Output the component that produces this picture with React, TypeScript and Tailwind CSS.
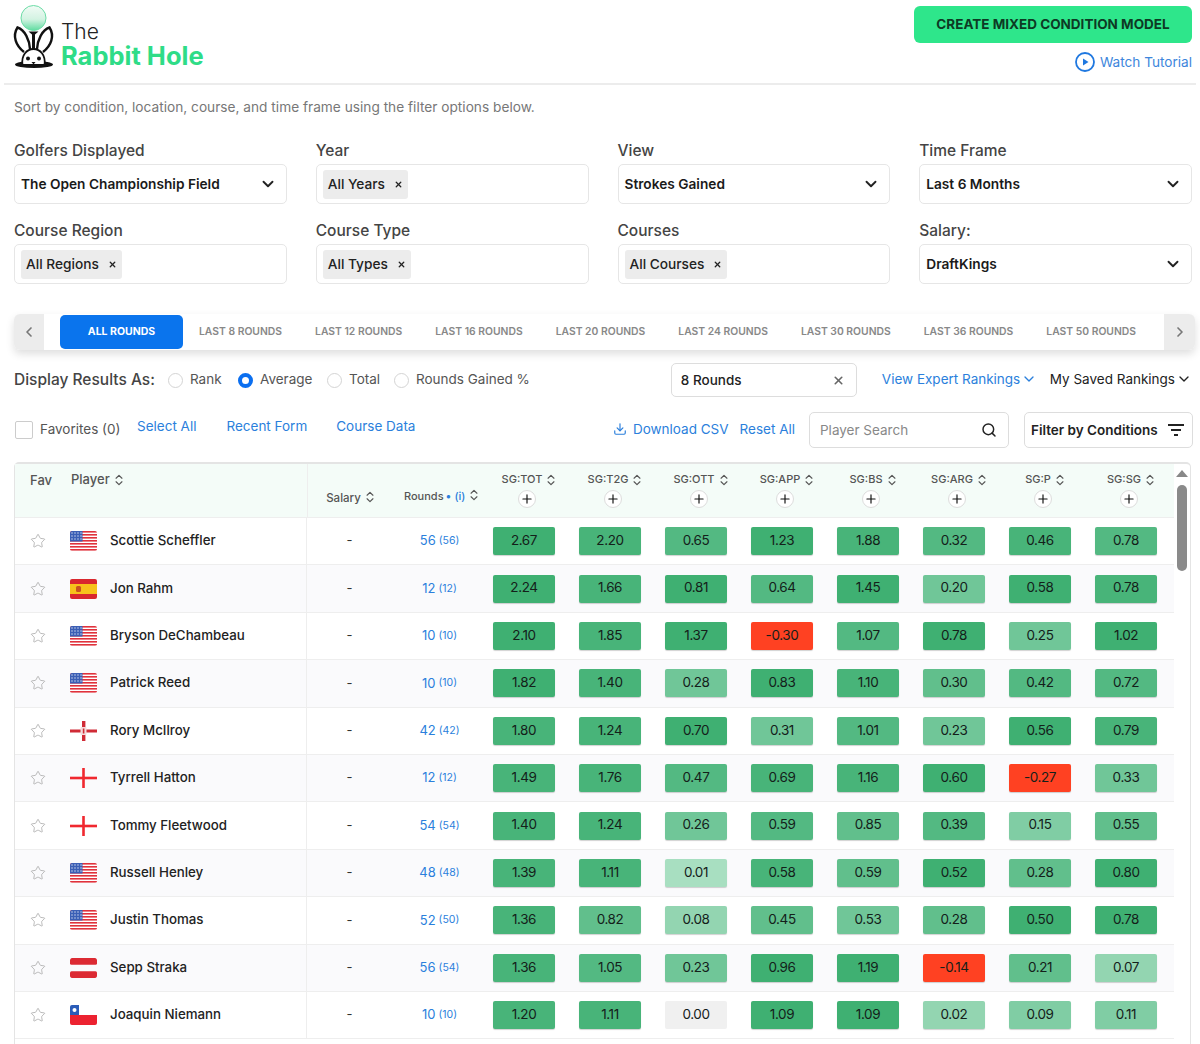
import { ChevronDown, ChevronLeft, ChevronRight, ChevronsUpDown, Download, Plus, Search, Star, X } from "lucide-react";

const shades: Record<string, string> = {
  a: "bg-[#3fb072]",
  b: "bg-[#48b479]",
  c: "bg-[#53b982]",
  d: "bg-[#61bf8c]",
  e: "bg-[#70c698]",
  f: "bg-[#80cda4]",
  g: "bg-[#93d5b1]",
  h: "bg-[#a8dfc1]",
  z: "bg-[#f0f0f0] !shadow-none",
  r: "bg-[#ff4122]",
};

const players = [
  { name: "Scottie Scheffler", flag: "us", rounds: "56", sub: "(56)", cells: "2.67:a 2.20:b 0.65:c 1.23:a 1.88:b 0.32:c 0.46:b 0.78:c" },
  { name: "Jon Rahm", flag: "es", rounds: "12", sub: "(12)", cells: "2.24:a 1.66:b 0.81:a 0.64:c 1.45:a 0.20:e 0.58:a 0.78:b" },
  { name: "Bryson DeChambeau", flag: "us", rounds: "10", sub: "(10)", cells: "2.10:a 1.85:b 1.37:a -0.30:r 1.07:c 0.78:a 0.25:e 1.02:a" },
  { name: "Patrick Reed", flag: "us", rounds: "10", sub: "(10)", cells: "1.82:a 1.40:b 0.28:e 0.83:a 1.10:b 0.30:d 0.42:c 0.72:c" },
  { name: "Rory McIlroy", flag: "nir", rounds: "42", sub: "(42)", cells: "1.80:b 1.24:b 0.70:a 0.31:e 1.01:c 0.23:e 0.56:a 0.79:b" },
  { name: "Tyrrell Hatton", flag: "en", rounds: "12", sub: "(12)", cells: "1.49:b 1.76:b 0.47:c 0.69:b 1.16:b 0.60:a -0.27:r 0.33:e" },
  { name: "Tommy Fleetwood", flag: "en", rounds: "54", sub: "(54)", cells: "1.40:b 1.24:b 0.26:e 0.59:c 0.85:d 0.39:c 0.15:f 0.55:d" },
  { name: "Russell Henley", flag: "us", rounds: "48", sub: "(48)", cells: "1.39:b 1.11:b 0.01:h 0.58:b 0.59:d 0.52:a 0.28:d 0.80:a" },
  { name: "Justin Thomas", flag: "us", rounds: "52", sub: "(50)", cells: "1.36:b 0.82:d 0.08:g 0.45:d 0.53:e 0.28:d 0.50:a 0.78:a" },
  { name: "Sepp Straka", flag: "at", rounds: "56", sub: "(54)", cells: "1.36:b 1.05:c 0.23:e 0.96:a 1.19:a -0.14:r 0.21:d 0.07:g" },
  { name: "Joaquin Niemann", flag: "cl", rounds: "10", sub: "(10)", cells: "1.20:b 1.11:b 0.00:z 1.09:a 1.09:a 0.02:g 0.09:f 0.11:f" },
];

const columns = ["SG:TOT", "SG:T2G", "SG:OTT", "SG:APP", "SG:BS", "SG:ARG", "SG:P", "SG:SG"];
const tabs = ["LAST 8 ROUNDS", "LAST 12 ROUNDS", "LAST 16 ROUNDS", "LAST 20 ROUNDS", "LAST 24 ROUNDS", "LAST 30 ROUNDS", "LAST 36 ROUNDS", "LAST 50 ROUNDS"];

function Logo() {
  return (
    <svg width="50" height="70" viewBox="0 0 50 70" className="shrink-0">
      <defs>
        <linearGradient id="ball" x1="0" y1="0" x2="0" y2="1">
          <stop offset="0" stopColor="#f2fbf6" />
          <stop offset="0.55" stopColor="#d3f3e2" />
          <stop offset="1" stopColor="#5fdca0" />
        </linearGradient>
      </defs>
      <circle cx="23.5" cy="18" r="12.5" fill="url(#ball)" stroke="#6bdca6" strokeWidth="1" />
      <path d="M14 52C6 46 2 36 7.500 27.500 15 30 19.500 40 20 49" fill="#fff" stroke="#111" strokeWidth="2.400" />
      <path d="M33 52c8-6 12-16 6.500-24.500C32 30 27.500 40 27 49" fill="#fff" stroke="#111" strokeWidth="2.400" />
      <path d="M18.500 31.500h10l-3.500 3v14.500h-3V34.500z" fill="#111" />
      <ellipse cx="24" cy="64.500" rx="19" ry="3.600" fill="#111" />
      <path d="M12.500 65C11 55 17 49 23.500 49S36 55 34.500 65z" fill="#fff" stroke="#111" strokeWidth="1.800" />
      <circle cx="18" cy="58.500" r="2" fill="#111" />
      <circle cx="29" cy="58.500" r="2" fill="#111" />
      <path d="M21.500 62h4l-2 2.400z" fill="#111" />
    </svg>
  );
}

function Flag({ code }: { code: string }) {
  if (code === "us") {
    return (
      <svg width="27" height="20" viewBox="0 0 27 20" className="shrink-0 rounded-[2px]">
        <rect width="27" height="20" fill="#fff" />
        {[0, 3, 6, 9, 12, 15, 18].map((y) => (
          <rect key={y} y={y} width="27" height="1.600" fill="#e0323c" />
        ))}
        <rect width="12.500" height="10.500" fill="#3b5fb5" />
        {[2, 5, 8].map((y) =>
          [2, 5, 8, 11].map((x) => <circle key={x + "-" + y} cx={x} cy={y} r="0.700" fill="#dfe6f7" />)
        )}
      </svg>
    );
  }
  if (code === "es") {
    return (
      <svg width="27" height="20" viewBox="0 0 27 20" className="shrink-0 rounded-[2px]">
        <rect width="27" height="20" fill="#d9272e" />
        <rect y="5" width="27" height="10" fill="#f7c21b" />
        <rect x="6" y="7" width="5" height="6" rx="1.500" fill="#c9531f" />
      </svg>
    );
  }
  if (code === "nir") {
    return (
      <svg width="27" height="20" viewBox="0 0 27 20" className="shrink-0">
        <rect y="8.500" width="27" height="3" fill="#d02b36" />
        <rect x="12" width="3.400" height="20" fill="#d02b36" />
        <rect x="10.500" y="6" width="6" height="8" rx="1" fill="#f3dcdc" />
        <rect x="12.800" y="7.500" width="1.600" height="5" fill="#d02b36" />
      </svg>
    );
  }
  if (code === "en") {
    return (
      <svg width="27" height="20" viewBox="0 0 27 20" className="shrink-0">
        <rect y="8.700" width="27" height="2.600" fill="#f0282f" />
        <rect x="12.200" width="2.600" height="20" fill="#f0282f" />
      </svg>
    );
  }
  if (code === "at") {
    return (
      <svg width="27" height="20" viewBox="0 0 27 20" className="shrink-0 rounded-[2px]">
        <rect width="27" height="6.700" rx="1.500" fill="#dc2a33" />
        <rect y="13.300" width="27" height="6.700" rx="1.500" fill="#dc2a33" />
      </svg>
    );
  }
  return (
    <svg width="27" height="20" viewBox="0 0 27 20" className="shrink-0 rounded-[2px]">
      <rect y="10" width="27" height="10" fill="#ec2230" />
      <rect width="9" height="10" fill="#2a5cb8" />
      <circle cx="4.500" cy="5" r="2" fill="#fff" />
    </svg>
  );
}

function Sort() {
  return <ChevronsUpDown size={14} strokeWidth={2} className="shrink-0 text-[#555]" />;
}

function SelectBox({ label, value }: { label: string; value: string }) {
  return (
    <div>
      <div className="h-[24px] text-[15.500px] leading-[24px] font-medium text-[#444]">{label}</div>
      <div className="mt-[1px] flex h-[40px] items-center justify-between rounded-[5px] border border-[#e6e6e6] pr-[9px] pl-[6px] text-[13.700px] font-semibold text-[#1a1a1a]">
        <span>{value}</span>
        <ChevronDown size={18} strokeWidth={2.500} className="text-[#222]" />
      </div>
    </div>
  );
}

function TagBox({ label, value }: { label: string; value: string }) {
  return (
    <div>
      <div className="h-[24px] text-[15.500px] leading-[24px] font-medium text-[#444]">{label}</div>
      <div className="mt-[1px] flex h-[40px] items-center rounded-[5px] border border-[#e6e6e6] pl-[6px]">
        <div className="flex h-[29px] items-center gap-[9px] rounded-[3px] bg-[#ececec] px-[5px] text-[13.700px] font-medium text-[#222]">
          <span>{value}</span>
          <X size={9} strokeWidth={3.500} className="text-[#222]" />
        </div>
      </div>
    </div>
  );
}

function Radio({ label, on, className }: { label: string; on?: boolean; className?: string }) {
  return (
    <div className={"flex items-center gap-[7px] " + (className || "")}>
      {on ? (
        <span className="h-[15px] w-[15px] rounded-full border-[4px] border-[#0b6ff0] bg-white" />
      ) : (
        <span className="h-[15px] w-[15px] rounded-full border border-[#d4d4d4] bg-white" />
      )}
      <span className="-translate-y-[1px] text-[13.500px] text-[#555]">{label}</span>
    </div>
  );
}

function PlayerRow({ p, i }: { p: (typeof players)[number]; i: number }) {
  return (
    <div className={"flex h-[47.400px] border-b border-[#eeeeee] " + (i % 2 ? "bg-[#fafafc]" : "bg-white")}>
      <div className="flex w-[45px] items-center justify-center pl-[1px]">
        <Star size={16} strokeWidth={1.200} className="text-[#aaaaaa]" />
      </div>
      <div className="flex w-[247px] items-center gap-[13px] border-r border-[#eeeeee] pl-[10px] text-[13.300px] font-medium text-[#222]">
        <Flag code={p.flag} />
        <span>{p.name}</span>
      </div>
      <div className="flex w-[85px] items-center justify-center text-[13px] text-[#333]">-</div>
      <div className="flex w-[89px] items-center justify-center gap-[3px] pl-[6px] text-[#2b7fdc]">
        <span className="text-[13px]">{p.rounds}</span>
        <span className="text-[10.500px]">{p.sub}</span>
      </div>
      {p.cells.split(" ").map((c, k) => {
        const [v, s] = c.split(":");
        return (
          <div key={k} className="flex w-[86px] items-center justify-center">
            <div className={"flex h-[28px] w-[62px] items-center justify-center rounded-[2px] pb-[2px] text-[13.500px] tracking-[-0.4px] text-[#14201a] shadow-[0_1px_1px_rgba(0,0,0,0.18)] " + shades[s]}>
              {v}
            </div>
          </div>
        );
      })}
    </div>
  );
}

export default function App() {
  return (
    <div className="h-screen w-[1200px] overflow-hidden bg-white [font-family:Inter,sans-serif]">
      <header className="mx-[4px] flex h-[85px] justify-between border-b-2 border-[#ececec] pr-[4px] pl-[6px]">
        <div className="flex items-start gap-[1px]">
          <Logo />
          <div className="pt-[20px]">
            <div className="text-[21px] leading-[23px] font-light text-[#222]">The</div>
            <div className="text-[25.500px] leading-[25px] font-bold text-[#2fdc87]">Rabbit Hole</div>
          </div>
        </div>
        <div className="flex flex-col items-end pt-[6px]">
          <div className="flex h-[37px] w-[278px] items-center justify-center rounded-[6px] bg-[#2ee68b] text-[13.500px] font-bold text-[#0d3a24]">
            CREATE MIXED CONDITION MODEL
          </div>
          <div className="mt-[9px] flex items-center gap-[5px] text-[13.600px] text-[#3d86dc]">
            <svg width="20" height="20" viewBox="0 0 20 20">
              <circle cx="10" cy="10" r="9" fill="none" stroke="#1f78e0" strokeWidth="1.800" />
              <path d="M8 6.500l5.500 3.500L8 13.500z" fill="#1f78e0" />
            </svg>
            Watch Tutorial
          </div>
        </div>
      </header>

      <div className="mt-[13px] px-[14px] text-[13.700px] leading-[18px] text-[#777]">
        Sort by condition, location, course, and time frame using the filter options below.
      </div>

      <div className="mt-[23px] grid w-[1192px] grid-cols-4 gap-x-[29px] gap-y-[15px] pl-[14px]">
        <SelectBox label="Golfers Displayed" value="The Open Championship Field" />
        <TagBox label="Year" value="All Years" />
        <SelectBox label="View" value="Strokes Gained" />
        <SelectBox label="Time Frame" value="Last 6 Months" />
        <TagBox label="Course Region" value="All Regions" />
        <TagBox label="Course Type" value="All Types" />
        <TagBox label="Courses" value="All Courses" />
        <SelectBox label="Salary:" value="DraftKings" />
      </div>

      <div className="mt-[30px] ml-[14px] flex h-[36px] w-[1181px] items-center rounded-[6px] bg-white shadow-[0_4px_8px_rgba(0,0,0,0.13)]">
        <div className="flex h-[36px] w-[30px] items-center justify-center rounded-l-[6px] bg-[#ececec]">
          <ChevronLeft size={16} strokeWidth={2.500} className="text-[#777]" />
        </div>
        <div className="ml-[16px] flex h-[34px] w-[123px] items-center justify-center rounded-[5px] bg-[#0a74ed] text-[10.500px] font-bold text-white">
          ALL ROUNDS
        </div>
        <div className="ml-[16px] flex flex-1 gap-[33px] text-[10.350px] font-semibold whitespace-nowrap text-[#888]">
          {tabs.map((t) => (
            <span key={t}>{t}</span>
          ))}
        </div>
        <div className="flex h-[36px] w-[31px] items-center justify-center rounded-r-[6px] bg-[#ececec]">
          <ChevronRight size={16} strokeWidth={2.500} className="text-[#777]" />
        </div>
      </div>

      <div className="mt-[13px] flex h-[34px] items-center pr-[8px] pl-[14px]">
        <span className="w-[154px] text-[15.500px] font-medium text-[#444]">Display Results As:</span>
        <Radio label="Rank" className="w-[70px]" />
        <Radio label="Average" on className="w-[89px]" />
        <Radio label="Total" className="w-[67px]" />
        <Radio label="Rounds Gained %" />
        <div className="ml-[141px] flex h-[34px] w-[186px] items-center justify-between rounded-[5px] border border-[#dddddd] pr-[11px] pl-[9px] text-[13.500px] font-medium text-[#222]">
          8 Rounds
          <X size={13} strokeWidth={3} className="text-[#666]" />
        </div>
        <div className="ml-[25px] flex -translate-y-[1px] items-center gap-[1px] text-[13.500px] text-[#2b7fdc]">
          View Expert Rankings
          <ChevronDown size={16} strokeWidth={2} />
        </div>
        <div className="ml-auto flex -translate-y-[1px] items-center gap-[1px] text-[13.500px] text-[#222]">
          My Saved Rankings
          <ChevronDown size={16} strokeWidth={2} />
        </div>
      </div>

      <div className="mt-[15px] flex h-[36px] items-center pr-[7px] pl-[15px]">
        <span className="h-[18px] w-[18px] rounded-[2px] border border-[#cccccc]" />
        <span className="ml-[7px] w-[97px] -translate-y-[1px] text-[13.500px] text-[#555]">Favorites (0)</span>
        <span className="-translate-y-[4px] text-[13.500px] text-[#2b7fdc]">Select All</span>
        <span className="ml-[30px] -translate-y-[4px] text-[13.500px] text-[#2b7fdc]">Recent Form</span>
        <span className="ml-[29px] -translate-y-[4px] text-[13.500px] text-[#2b7fdc]">Course Data</span>
        <div className="ml-auto flex -translate-y-[1px] items-center gap-[6px] text-[13.500px] text-[#2b7fdc]">
          <Download size={14} strokeWidth={2} />
          Download CSV
        </div>
        <span className="ml-[11px] -translate-y-[1px] text-[13.500px] text-[#2b7fdc]">Reset All</span>
        <div className="ml-[14px] flex h-[36px] w-[200px] items-center justify-between rounded-[5px] border border-[#dddddd] pr-[11px] pl-[10px] text-[13.500px] text-[#888]">
          Player Search
          <Search size={16} strokeWidth={2.200} className="text-[#222]" />
        </div>
        <div className="ml-[15px] flex h-[36px] w-[169px] items-center justify-between rounded-[5px] border border-[#dddddd] pr-[8px] pl-[6px] text-[13.500px] font-semibold text-[#222]">
          Filter by Conditions
          <svg width="16" height="12" viewBox="0 0 16 12">
            <path d="M0 1h16M3 6h10M6 11h4" stroke="#222" strokeWidth="1.800" fill="none" />
          </svg>
        </div>
      </div>

      <div className="mt-[14px] ml-[14px] flex w-[1177px] rounded-t-[5px] border-t-2 border-r border-l border-[#e4e4e4]">
        <div className="w-[1159px]">
          <div className="flex h-[54px] border-b border-[#eeeeee] bg-[#f4fcf8] text-[#555]">
            <div className="w-[45px] pt-[7px] pl-[15px] text-[13px] font-medium">Fav</div>
            <div className="flex h-[32px] w-[247px] items-center gap-[2px] pl-[11px] text-[13px] font-medium">
              Player
              <Sort />
            </div>
            <div className="flex w-[85px] items-start justify-center gap-[2px] border-l border-[#eeeeee] pt-[26px] pl-[3px] text-[11.500px] font-medium">
              Salary
              <Sort />
            </div>
            <div className="flex w-[89px] items-start gap-[2px] pt-[24px] pl-[12px] text-[11px] font-medium whitespace-nowrap">
              <span>Rounds</span>
              <span className="text-[#2b7fdc]">• (i)</span>
              <Sort />
            </div>
            {columns.map((c) => (
              <div key={c} className="flex w-[86px] flex-col items-center pt-[8px] pl-[6px]">
                <div className="flex translate-x-[3px] items-center gap-[2px] text-[11px] leading-[15px] font-medium">
                  {c}
                  <Sort />
                </div>
                <div className="mt-[3px] flex h-[18px] w-[18px] items-center justify-center rounded-full border border-[#dddddd] bg-white">
                  <Plus size={14} strokeWidth={2} className="text-[#111]" />
                </div>
              </div>
            ))}
          </div>
          {players.map((p, i) => (
            <PlayerRow key={p.name} p={p} i={i} />
          ))}
          <div className="h-[47px]" />
        </div>
        <div className="flex flex-1 flex-col items-center pt-[6px]">
          <div className="h-0 w-0 border-r-[6px] border-b-[7px] border-l-[6px] border-r-transparent border-b-[#888] border-l-transparent" />
          <div className="mt-[8px] h-[86px] w-[10px] rounded-full bg-[#8a8a8a]" />
        </div>
      </div>
    </div>
  );
}
